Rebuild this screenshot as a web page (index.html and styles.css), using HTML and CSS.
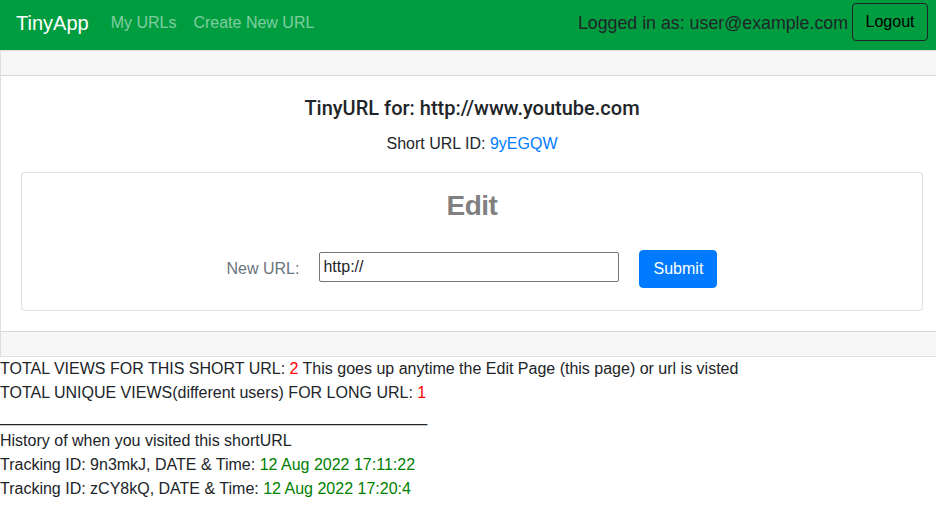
FILE: index.html
```html
<!DOCTYPE html>
<html>
<head>
<meta charset="utf-8">
<link rel="stylesheet" href="styles.css">
</head>
<body>
<nav class="navbar">
  <a class="brand" href="#">TinyApp</a>
  <div class="nav-links">
    <a href="#">My URLs</a>
    <a href="#">Create New URL</a>
  </div>
  <div class="nav-right">
    <span class="logged">Logged in as: user@example.com</span>
    <button class="btn-logout">Logout</button>
  </div>
</nav>
<main>
  <div class="card outer">
    <div class="card-header"></div>
    <div class="card-body center">
      <h5 class="title">TinyURL for: http://www.youtube.com</h5>
      <p class="short">Short URL ID: <a href="#">9yEGQW</a></p>
      <div class="card inner">
        <div class="card-body inner-body">
          <h2 class="edit">Edit</h2>
          <form class="form-inline">
            <label class="lbl">New URL:</label>
            <input class="url-input" type="text" value="http://">
            <button type="button" class="btn-primary">Submit</button>
          </form>
        </div>
      </div>
    </div>
    <div class="card-footer"></div>
  </div>
  <div class="stats">
    <div>TOTAL VIEWS FOR THIS SHORT URL: <span class="red">2</span> This goes up anytime the Edit Page (this page) or url is visted</div>
    <div>TOTAL UNIQUE VIEWS(different users) FOR LONG URL: <span class="red">1</span></div>
    <div>________________________________________________</div>
    <div>History of when you visited this shortURL</div>
    <div>Tracking ID: 9n3mkJ, DATE &amp; Time: <span class="green">12 Aug 2022 17:11:22</span></div>
    <div>Tracking ID: zCY8kQ, DATE &amp; Time: <span class="green">12 Aug 2022 17:20:4</span></div>
  </div>
</main>
</body>
</html>
```
FILE: styles.css
```css
* { box-sizing: border-box; }
html, body { overflow-x: hidden; }
body {
  margin: 0;
  font-family: "Liberation Sans", Arial, sans-serif;
  font-size: 16px;
  line-height: 24px;
  color: #212529;
  background: #fff;
}
a { text-decoration: none; }
.navbar {
  height: 50px;
  background: #009d40;
  display: flex;
  align-items: center;
  padding: 0 8px 5px 16px;
}
.brand {
  color: #fff;
  font-size: 20px;
  margin-right: 22px;
}
.nav-links { display: flex; gap: 17px; flex: 1; }
.nav-links a { color: rgba(255,255,255,0.5); font-size: 16px; }
.nav-right { display: flex; align-items: center; gap: 4px; }
.logged { font-size: 17.8px; color: #212529; }
.btn-logout {
  font-family: inherit;
  font-size: 16px;
  color: #000;
  background: transparent;
  border: 1px solid #212529;
  border-radius: 4px;
  height: 38px;
  width: 76px;
  padding: 0;
  margin-top: -1px;
}
.card {
  border: 1px solid rgba(0,0,0,0.125);
  border-radius: 4px;
  background: #fff;
}
.outer {
  width: 944px;
  border-radius: 0;
}
.card-header {
  height: 25px;
  background: #f7f7f7;
  border-bottom: 1px solid rgba(0,0,0,0.125);
}
.card-footer {
  height: 25px;
  background: #f7f7f7;
  border-top: 1px solid rgba(0,0,0,0.125);
}
.card-body { padding: 20px; }
.inner-body { padding-bottom: 22px; }
.center { text-align: center; }
.title {
  margin: 0 0 12px;
  font-family: Roboto, "Liberation Sans", sans-serif;
  font-size: 20px;
  font-weight: 500;
  line-height: 24px;
}
.short { margin: 0 0 16px; }
.short a { color: #007bff; }
.edit {
  margin: 0 0 31px;
  font-size: 28px;
  line-height: 26px;
  letter-spacing: -0.5px;
  font-weight: bold;
  color: #808080;
}
.form-inline {
  display: flex;
  justify-content: center;
  align-items: center;
  height: 38px;
}
.lbl { color: #6c757d; margin-right: 20px; }
.url-input {
  width: 300px;
  height: 30px;
  font-family: inherit;
  font-size: 16px;
  padding: 0 3px;
  border: 1px solid #767676;
  border-radius: 2px;
  color: #212529;
  margin-right: 20px;
  margin-bottom: 4px;
}
.btn-primary {
  font-family: inherit;
  font-size: 16px;
  height: 38px;
  width: 78px;
  padding: 0;
  color: #fff;
  background: #007bff;
  border: 1px solid #007bff;
  border-radius: 4px;
}
.red { color: #ff0000; }
.green { color: #008000; }
```
